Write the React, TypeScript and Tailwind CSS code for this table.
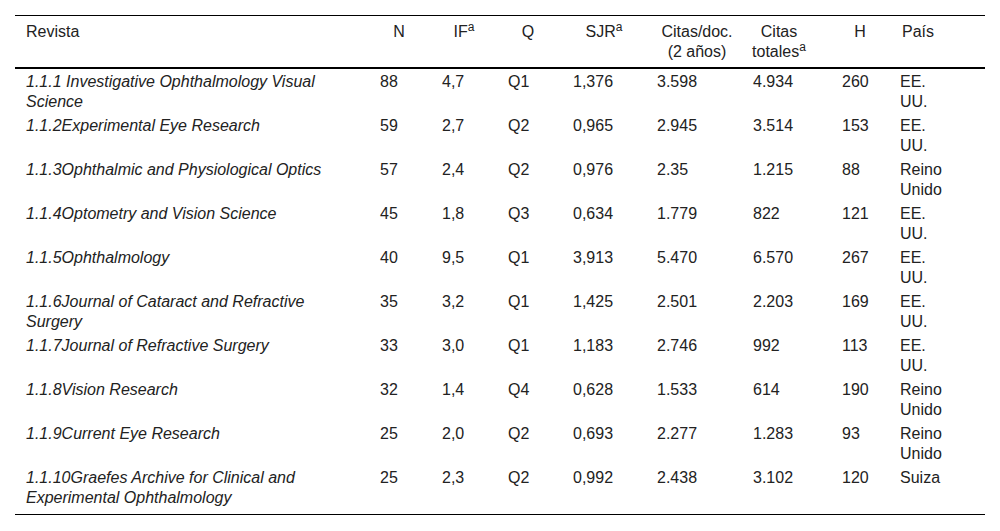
import React from 'react';

type Row = {
  revista: string;
  n: number;
  fi: string;
  q: string;
  sjr: string;
  citasDoc: string;
  citasTot: string;
  h: number;
  pais: string;
};

const rows: Row[] = [
  { revista: '1.1.1 Investigative Ophthalmology Visual Science', n: 88, fi: '4,7', q: 'Q1', sjr: '1,376', citasDoc: '3.598', citasTot: '4.934', h: 260, pais: 'EE. UU.' },
  { revista: '1.1.2Experimental Eye Research', n: 59, fi: '2,7', q: 'Q2', sjr: '0,965', citasDoc: '2.945', citasTot: '3.514', h: 153, pais: 'EE. UU.' },
  { revista: '1.1.3Ophthalmic and Physiological Optics', n: 57, fi: '2,4', q: 'Q2', sjr: '0,976', citasDoc: '2.35', citasTot: '1.215', h: 88, pais: 'Reino Unido' },
  { revista: '1.1.4Optometry and Vision Science', n: 45, fi: '1,8', q: 'Q3', sjr: '0,634', citasDoc: '1.779', citasTot: '822', h: 121, pais: 'EE. UU.' },
  { revista: '1.1.5Ophthalmology', n: 40, fi: '9,5', q: 'Q1', sjr: '3,913', citasDoc: '5.470', citasTot: '6.570', h: 267, pais: 'EE. UU.' },
  { revista: '1.1.6Journal of Cataract and Refractive Surgery', n: 35, fi: '3,2', q: 'Q1', sjr: '1,425', citasDoc: '2.501', citasTot: '2.203', h: 169, pais: 'EE. UU.' },
  { revista: '1.1.7Journal of Refractive Surgery', n: 33, fi: '3,0', q: 'Q1', sjr: '1,183', citasDoc: '2.746', citasTot: '992', h: 113, pais: 'EE. UU.' },
  { revista: '1.1.8Vision Research', n: 32, fi: '1,4', q: 'Q4', sjr: '0,628', citasDoc: '1.533', citasTot: '614', h: 190, pais: 'Reino Unido' },
  { revista: '1.1.9Current Eye Research', n: 25, fi: '2,0', q: 'Q2', sjr: '0,693', citasDoc: '2.277', citasTot: '1.283', h: 93, pais: 'Reino Unido' },
  { revista: '1.1.10Graefes Archive for Clinical and Experimental Ophthalmology', n: 25, fi: '2,3', q: 'Q2', sjr: '0,992', citasDoc: '2.438', citasTot: '3.102', h: 120, pais: 'Suiza' },
];

// superscript "a" marker used in the header
const Sup: React.FC<{ children: React.ReactNode }> = ({ children }) => (
  <sup className="text-[12px]">{children}</sup>
);

export default function App() {
  const th = 'pt-[6px] pb-[5px] align-top font-normal text-center';
  const td = 'pl-[11px] pt-[3px] pb-[1px] align-top text-left';

  return (
    <div className="w-[1000px] h-[531px] bg-white px-[15px] pt-[15px] text-[#222] text-[16px] leading-[20px] font-['Liberation_Sans',Arial,sans-serif]">
      <table className="w-full table-fixed border-collapse border-t border-b border-black">
        <colgroup>
          <col className="w-[354px]" />
          <col className="w-[62px]" />
          <col className="w-[66px]" />
          <col className="w-[65px]" />
          <col className="w-[84px]" />
          <col className="w-[96px]" />
          <col className="w-[89px]" />
          <col className="w-[58px]" />
          <col className="w-[96px]" />
        </colgroup>
        <thead>
          <tr className="border-b-2 border-black">
            <th className={`${th} !text-left pl-[11px]`}>Revista</th>
            <th className={`${th} pl-[11px] pr-[13px]`}>N</th>
            <th className={`${th} pl-[11px] pr-[11px]`}>IF<Sup>a</Sup></th>
            <th className={`${th} pl-[11px] pr-[14px]`}>Q</th>
            <th className={`${th} pl-[11px] pr-[11px]`}>SJR<Sup>a</Sup></th>
            <th className={`${th} pl-[11px] pr-[5px]`}>Citas/doc. (2 años)</th>
            <th className={`${th} pl-[7px] pr-[22px]`}>Citas totales<Sup>a</Sup></th>
            <th className={`${th} pl-[11px] pr-[11px]`}>H</th>
            <th className={`${th} pl-[11px] pr-[49px]`}>País</th>
          </tr>
        </thead>
        <tbody>
          {rows.map((r, i) => {
            const last = i === rows.length - 1 ? '!pb-[6px]' : '';
            return (
              <tr key={i}>
                <td className={`${td} ${last} pr-[24px] italic`}>{r.revista}</td>
                <td className={`${td} ${last} pr-[11px]`}>{r.n}</td>
                <td className={`${td} ${last} pr-[11px]`}>{r.fi}</td>
                <td className={`${td} ${last} pr-[11px]`}>{r.q}</td>
                <td className={`${td} ${last} pr-[11px]`}>{r.sjr}</td>
                <td className={`${td} ${last} pr-[11px]`}>{r.citasDoc}</td>
                <td className={`${td} ${last} pr-[11px]`}>{r.citasTot}</td>
                <td className={`${td} ${last} pr-[11px]`}>{r.h}</td>
                <td className={`${td} ${last} pr-[37px]`}>{r.pais}</td>
              </tr>
            );
          })}
        </tbody>
      </table>
    </div>
  );
}
